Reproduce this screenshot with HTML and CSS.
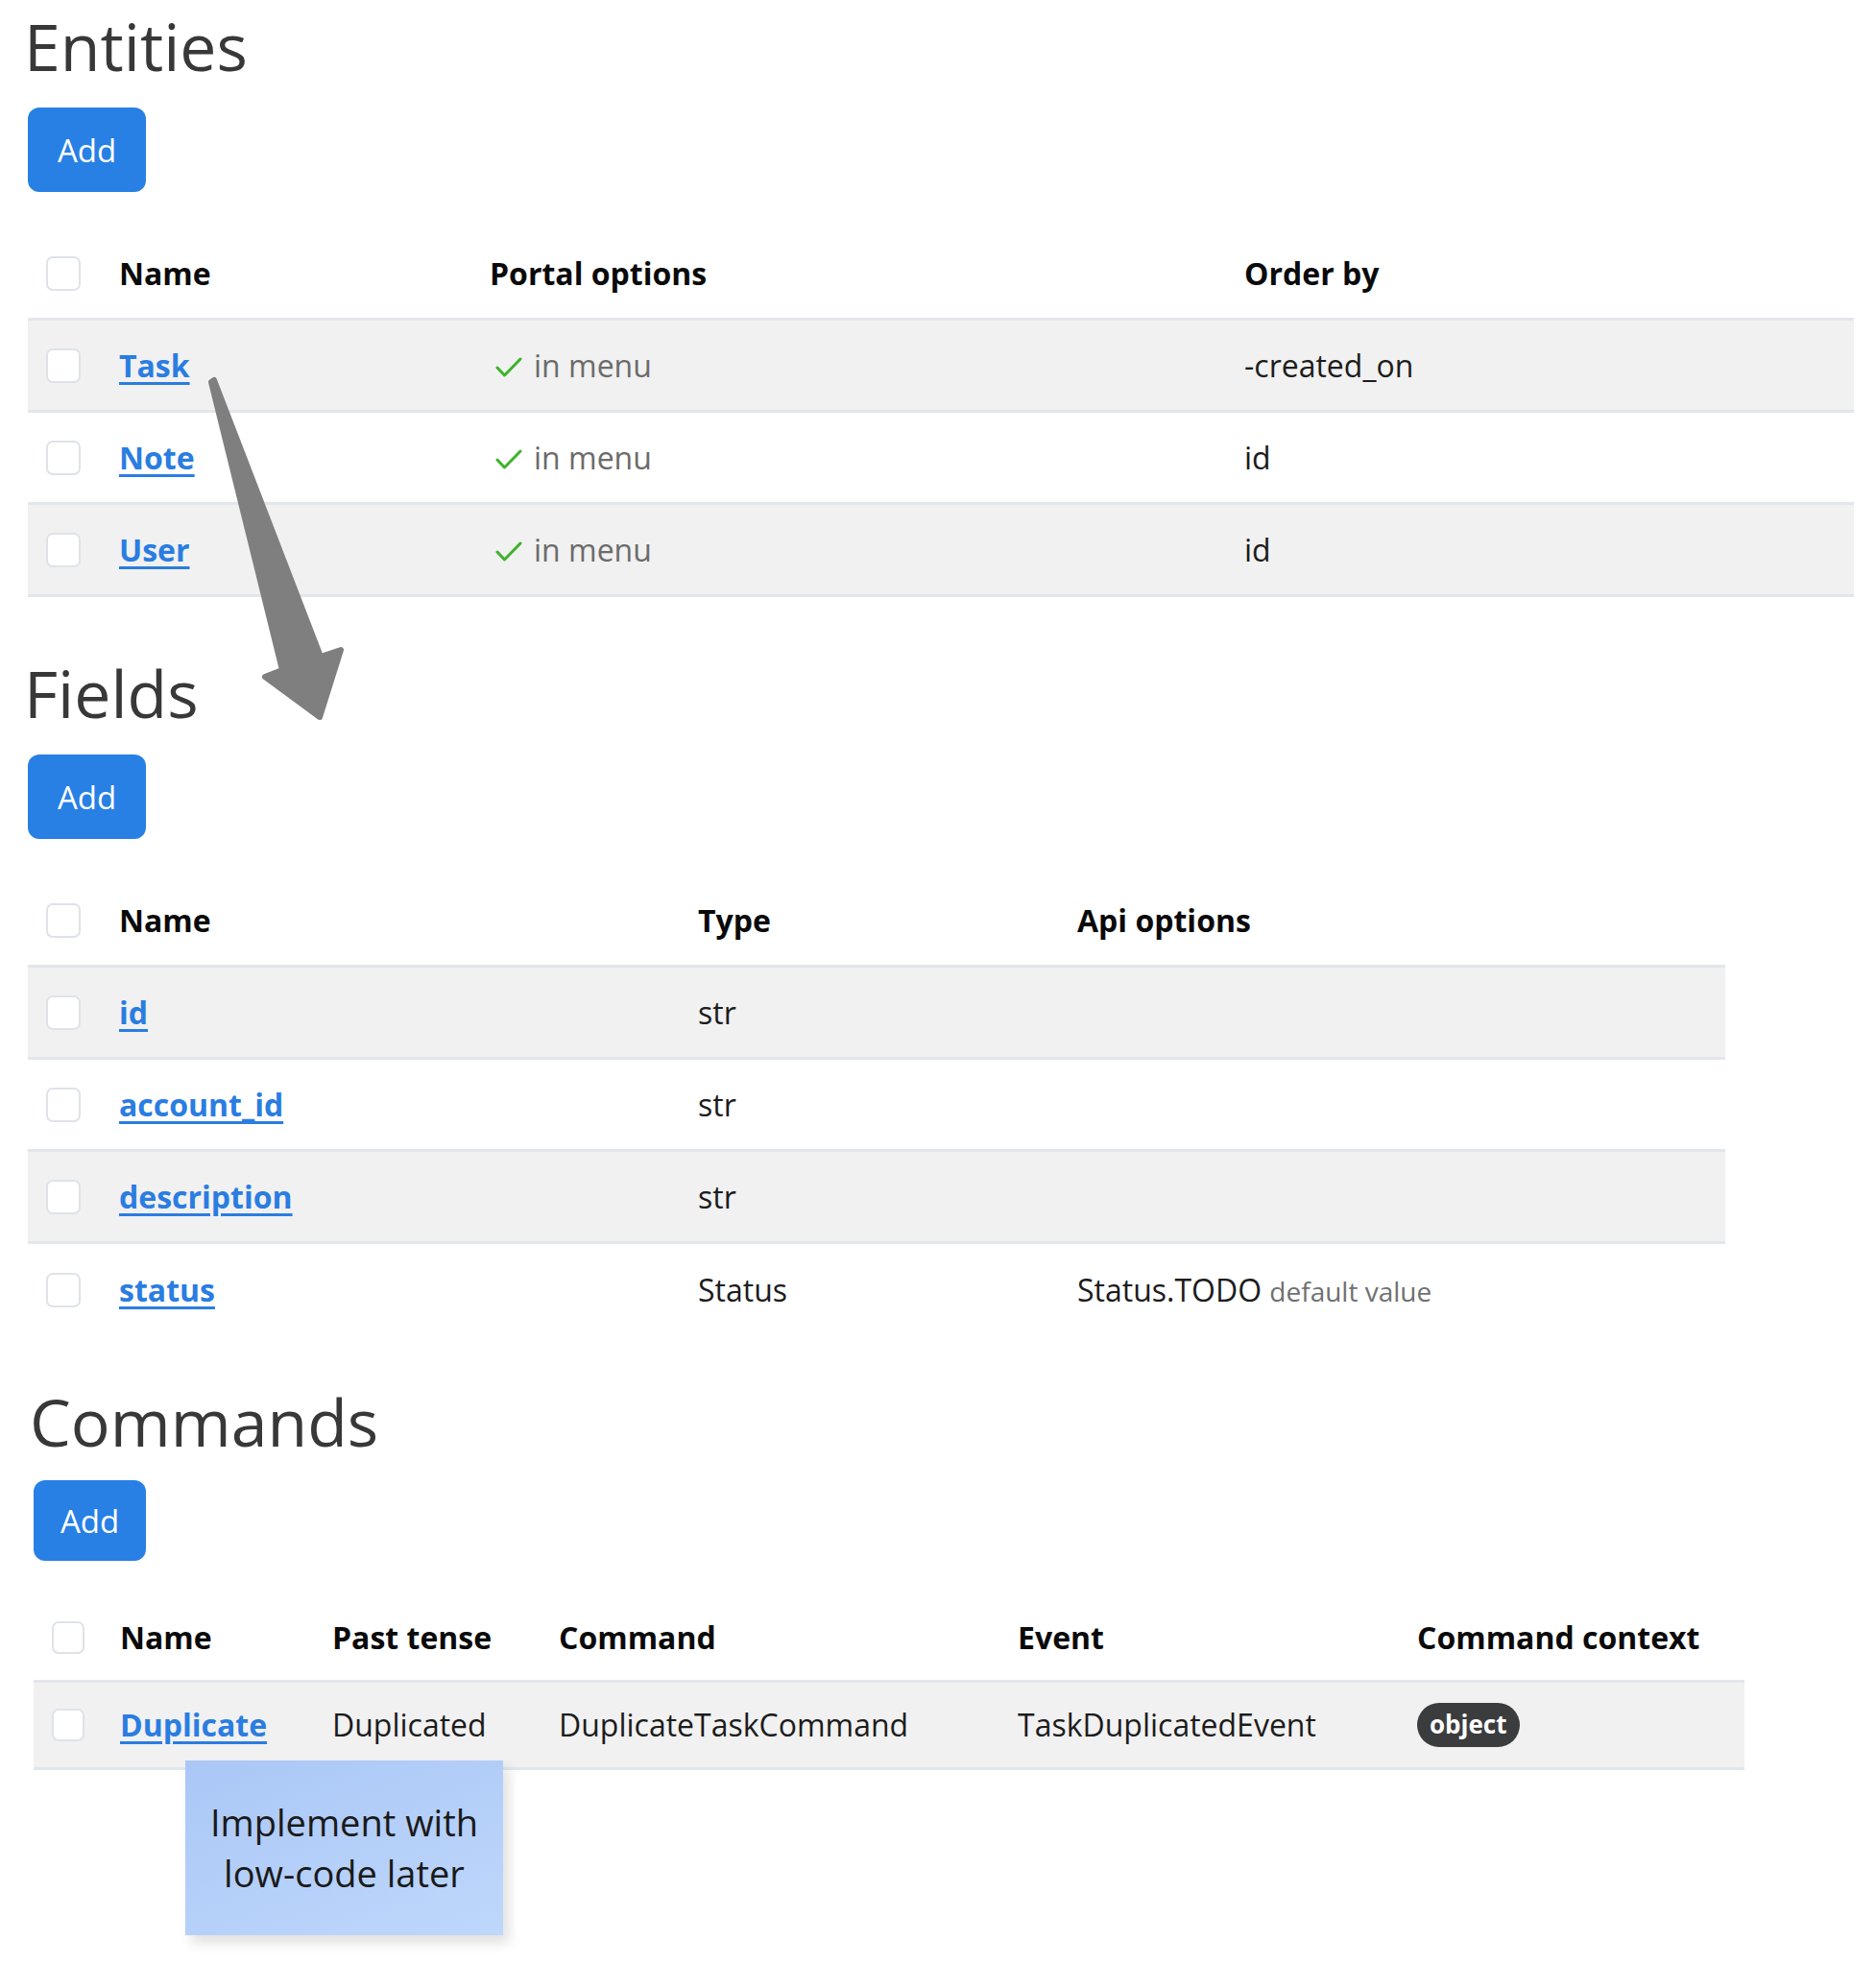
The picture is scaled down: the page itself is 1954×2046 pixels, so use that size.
FILE: index.html
```html
<!DOCTYPE html>
<html lang="en">
<head>
  <meta charset="UTF-8">
  <title>Task entity</title>
  <link rel="stylesheet" href="styles.css">
</head>
<body>
  <div class="page">
    <section class="section">
      <h2>Entities</h2>
      <button class="btn">Add</button>
      <table class="grid grid-entities">
        <thead>
          <tr>
            <th class="col-check"><input type="checkbox" class="check"></th>
            <th class="col-name">Name</th>
            <th class="col-portal">Portal options</th>
            <th class="col-order">Order by</th>
          </tr>
        </thead>
        <tbody>
          <tr>
            <td><input type="checkbox" class="check"></td>
            <td><a href="#">Task</a></td>
            <td class="opt"><svg class="tick" viewBox="0 0 28 22"><path d="M2 11 L9.5 19 L26 2"/></svg>in menu</td>
            <td>-created_on</td>
          </tr>
          <tr>
            <td><input type="checkbox" class="check"></td>
            <td><a href="#">Note</a></td>
            <td class="opt"><svg class="tick" viewBox="0 0 28 22"><path d="M2 11 L9.5 19 L26 2"/></svg>in menu</td>
            <td>id</td>
          </tr>
          <tr>
            <td><input type="checkbox" class="check"></td>
            <td><a href="#">User</a></td>
            <td class="opt"><svg class="tick" viewBox="0 0 28 22"><path d="M2 11 L9.5 19 L26 2"/></svg>in menu</td>
            <td>id</td>
          </tr>
        </tbody>
      </table>
    </section>

    <section class="section">
      <h2>Fields</h2>
      <button class="btn">Add</button>
      <table class="grid grid-fields">
        <thead>
          <tr>
            <th class="col-check"><input type="checkbox" class="check"></th>
            <th class="col-name">Name</th>
            <th class="col-type">Type</th>
            <th class="col-api">Api options</th>
          </tr>
        </thead>
        <tbody>
          <tr>
            <td><input type="checkbox" class="check"></td>
            <td><a href="#">id</a></td>
            <td>str</td>
            <td></td>
          </tr>
          <tr>
            <td><input type="checkbox" class="check"></td>
            <td><a href="#">account_id</a></td>
            <td>str</td>
            <td></td>
          </tr>
          <tr>
            <td><input type="checkbox" class="check"></td>
            <td><a href="#">description</a></td>
            <td>str</td>
            <td></td>
          </tr>
          <tr>
            <td><input type="checkbox" class="check"></td>
            <td><a href="#">status</a></td>
            <td>Status</td>
            <td>Status.TODO <span class="muted">default value</span></td>
          </tr>
        </tbody>
      </table>
    </section>

    <section class="section section-commands">
      <h2>Commands</h2>
      <button class="btn">Add</button>
      <table class="grid grid-commands">
        <thead>
          <tr>
            <th class="col-check"><input type="checkbox" class="check"></th>
            <th class="col-name">Name</th>
            <th class="col-past">Past tense</th>
            <th class="col-command">Command</th>
            <th class="col-event">Event</th>
            <th class="col-context">Command context</th>
          </tr>
        </thead>
        <tbody>
          <tr>
            <td><input type="checkbox" class="check"></td>
            <td><a href="#">Duplicate</a></td>
            <td>Duplicated</td>
            <td>DuplicateTaskCommand</td>
            <td>TaskDuplicatedEvent</td>
            <td><span class="badge">object</span></td>
          </tr>
        </tbody>
      </table>
    </section>

    <!-- annotations drawn over the page -->
    <svg class="arrow" viewBox="0 0 180 390">
      <polygon points="20,18 23,16 134,304 155,297 133,367 76,325 94,318"/>
    </svg>

    <div class="note">Implement with<br>low-code later</div>
  </div>
</body>
</html>
```

FILE: styles.css
```css
* {
  box-sizing: border-box;
}

body {
  margin: 0;
  background: #fff;
  font-family: 'Open Sans', sans-serif;
  color: #1c1c1c;
}

.page {
  position: relative;
  width: 1954px;
  min-height: 2046px;
  padding-left: 29px;
  overflow: hidden;
}

/* h2 top margin collapses into this one */
.section + .section {
  margin-top: 60px;
}

h2 {
  margin: 8px 0 0 -4px;
  font-size: 68px;
  line-height: 80px;
  font-weight: 400;
  color: #383838;
}

.btn {
  display: block;
  margin-top: 24px;
  height: 88px;
  padding: 0 31px;
  border: none;
  border-radius: 12px;
  background: #2880e4;
  color: #fff;
  font-family: 'Open Sans', sans-serif;
  font-size: 33px;
  cursor: pointer;
}

/* tables */
.grid {
  margin-top: 38px;
  border-collapse: separate;
  border-spacing: 0;
  table-layout: fixed;
}

.grid th,
.grid td {
  height: 96px;
  padding: 0 0 0 19px;
  border-bottom: 3px solid #e3e6ea;
  text-align: left;
  vertical-align: middle;
  font-size: 32px;
  line-height: 40px;
  white-space: nowrap;
}

.grid th {
  font-weight: 700;
  color: #0a0a0a;
}

.grid tbody tr:nth-child(odd) td {
  background: #f1f1f1;
}

.grid-fields tbody tr:last-child td {
  border-bottom: none;
}

.grid a {
  color: #2a7de1;
  font-weight: 700;
  text-decoration: underline;
  text-decoration-thickness: 3px;
  text-underline-offset: 5px;
}

.grid-entities { width: 1902px; }
.grid-entities .col-check { width: 76px; }
.grid-entities .col-name { width: 386px; }
.grid-entities .col-portal { width: 786px; }
.grid-entities .col-order { width: 654px; }

.grid-fields { width: 1768px; }
.grid-fields .col-check { width: 76px; }
.grid-fields .col-name { width: 603px; }
.grid-fields .col-type { width: 395px; }
.grid-fields .col-api { width: 694px; }

.grid-commands { width: 1782px; }
.grid-commands .col-check { width: 71px; }
.grid-commands .col-name { width: 221px; }
.grid-commands .col-past { width: 236px; }
.grid-commands .col-command { width: 478px; }
.grid-commands .col-event { width: 416px; }
.grid-commands .col-context { width: 360px; }

.check {
  appearance: none;
  display: block;
  margin: 0;
  width: 36px;
  height: 36px;
  border: 2px solid #dfe3e8;
  border-radius: 7px;
  background: #fff;
}

.opt {
  color: #6b6b6b;
  font-size: 28px;
}

.tick {
  width: 28px;
  height: 22px;
  margin: 0 12px 0 6px;
  vertical-align: -1px;
  fill: none;
  stroke: #3cb32a;
  stroke-width: 3;
  stroke-linecap: round;
  stroke-linejoin: round;
}

.muted {
  color: #707070;
  font-size: 28px;
}

.badge {
  display: inline-block;
  height: 46px;
  padding: 0 13px;
  border-radius: 23px;
  background: #3b3c3e;
  color: #fff;
  font-size: 26px;
  font-weight: 700;
  line-height: 45px;
  vertical-align: middle;
}

/* commands block was captured a bit smaller */
.section + .section-commands {
  margin-top: 49px;
  padding-left: 6px;
}

.section-commands .btn {
  margin-top: 21px;
  height: 84px;
  padding: 0 28px;
}

.section-commands .grid {
  margin-top: 36px;
}

.section-commands .grid th,
.section-commands .grid td {
  height: 91px;
}

.section-commands .check {
  width: 34px;
  height: 34px;
}

/* annotations */
.arrow {
  position: absolute;
  left: 200px;
  top: 380px;
  width: 180px;
  height: 390px;
}

.arrow polygon {
  fill: #7f7f7f;
  stroke: #7f7f7f;
  stroke-width: 6;
  stroke-linejoin: round;
}

.note {
  position: absolute;
  left: 193px;
  top: 1834px;
  width: 331px;
  height: 182px;
  display: flex;
  align-items: center;
  justify-content: center;
  text-align: center;
  background: linear-gradient(160deg, #aac7f6, #bed7fb);
  box-shadow: 6px 8px 12px rgba(0, 0, 0, 0.12);
  font-size: 38px;
  line-height: 53px;
  color: #1a1a1a;
}
```
